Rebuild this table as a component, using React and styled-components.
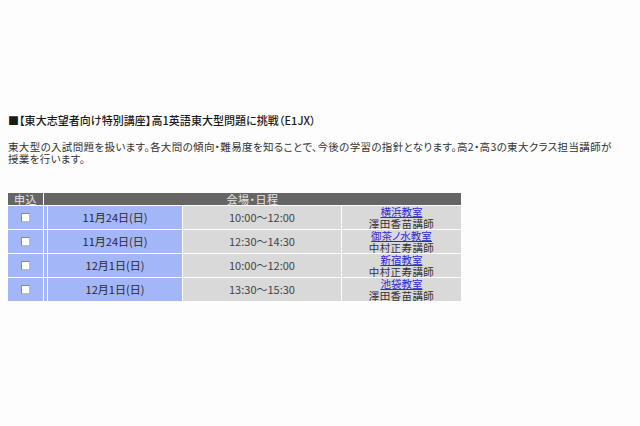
import React from "react";
import styled, { createGlobalStyle } from "styled-components";

const Global = createGlobalStyle`
  html, body { margin: 0; padding: 0; background: #fdfdfd; }
  body { font-family: "Noto Sans CJK JP", "Noto Sans", sans-serif; font-feature-settings: "palt"; color: #333; }
`;

const Page = styled.div`
  width: 640px;
  height: 426px;
  padding: 113px 0 0 8px;
  box-sizing: border-box;
`;

const Title = styled.h2`
  margin: 0;
  font-size: 11px;
  line-height: 14px;
  font-weight: 500;
  color: #1a1a1a;
  letter-spacing: 0.05px;
`;

const Lead = styled.p`
  margin: 14px 0 0;
  font-size: 10.5px;
  line-height: 12px;
  color: #333;
  letter-spacing: 0.35px;
`;

const Table = styled.table`
  margin: 27px 0 0 -1px;
  border-collapse: separate;
  border-spacing: 1px;
  table-layout: fixed;
  width: 454px;
  font-size: 11px;
  color: #333;
`;

const HeadCell = styled.th`
  background: #656565;
  color: #e6e6e6;
  font-weight: normal;
  height: 12px;
  padding: 0;
  font-size: 11px;
  line-height: 12px;
  text-align: center;
  letter-spacing: 0.5px;
`;

const Cell = styled.td`
  padding: 0;
  height: 23px;
  text-align: center;
  vertical-align: middle;
  line-height: 11.5px;
  color: ${(p) => (p.$tone === "blue" ? "#2a2a2a" : "#444")};
  background: ${(p) => (p.$tone === "blue" ? "#a3b6f7" : "#d9d9d9")};
`;

const Box = styled.input`
  appearance: none;
  -webkit-appearance: none;
  width: 9px;
  height: 9px;
  display: block;
  margin: 0 auto;
  border: 1px solid #8a8a8a;
  border-right-color: #bbb;
  border-bottom-color: #bbb;
  background: #fff;
  box-sizing: border-box;
`;

const Place = styled.a`
  color: #2b2bd0;
  text-decoration: underline;
  display: block;
  font-size: 10.5px;
`;

const Teacher = styled.span`
  display: block;
  color: #333;
  font-size: 10.5px;
  letter-spacing: 0.4px;
`;

const rows = [
  { date: "11月24日(日)", time: "10:00〜12:00", place: "横浜教室", teacher: "澤田香苗講師" },
  { date: "11月24日(日)", time: "12:30〜14:30", place: "御茶ノ水教室", teacher: "中村正寿講師" },
  { date: "12月1日(日)", time: "10:00〜12:00", place: "新宿教室", teacher: "中村正寿講師" },
  { date: "12月1日(日)", time: "13:30〜15:30", place: "池袋教室", teacher: "澤田香苗講師" },
];

export default function App() {
  return (
    <Page>
      <Global />
      <Title>■【東大志望者向け特別講座】高1英語東大型問題に挑戦（E1JX）</Title>
      <Lead>
        東大型の入試問題を扱います。各大問の傾向・難易度を知ることで、今後の学習の指針となります。高2・高3の東大クラス担当講師が
        <br />
        授業を行います。
      </Lead>
      <Table>
        <colgroup>
          <col style={{ width: 35 }} />
          <col style={{ width: 3 }} />
          <col style={{ width: 134 }} />
          <col style={{ width: 158 }} />
          <col style={{ width: 119 }} />
        </colgroup>
        <thead>
          <tr>
            <HeadCell>申込</HeadCell>
            <HeadCell colSpan={4}>会場・日程</HeadCell>
          </tr>
        </thead>
        <tbody>
          {rows.map((r, i) => (
            <tr key={i}>
              <Cell $tone="blue">
                <Box type="checkbox" />
              </Cell>
              <Cell $tone="blue" />
              <Cell $tone="blue">{r.date}</Cell>
              <Cell>{r.time}</Cell>
              <Cell>
                <Place href="#">{r.place}</Place>
                <Teacher>{r.teacher}</Teacher>
              </Cell>
            </tr>
          ))}
        </tbody>
      </Table>
    </Page>
  );
}
